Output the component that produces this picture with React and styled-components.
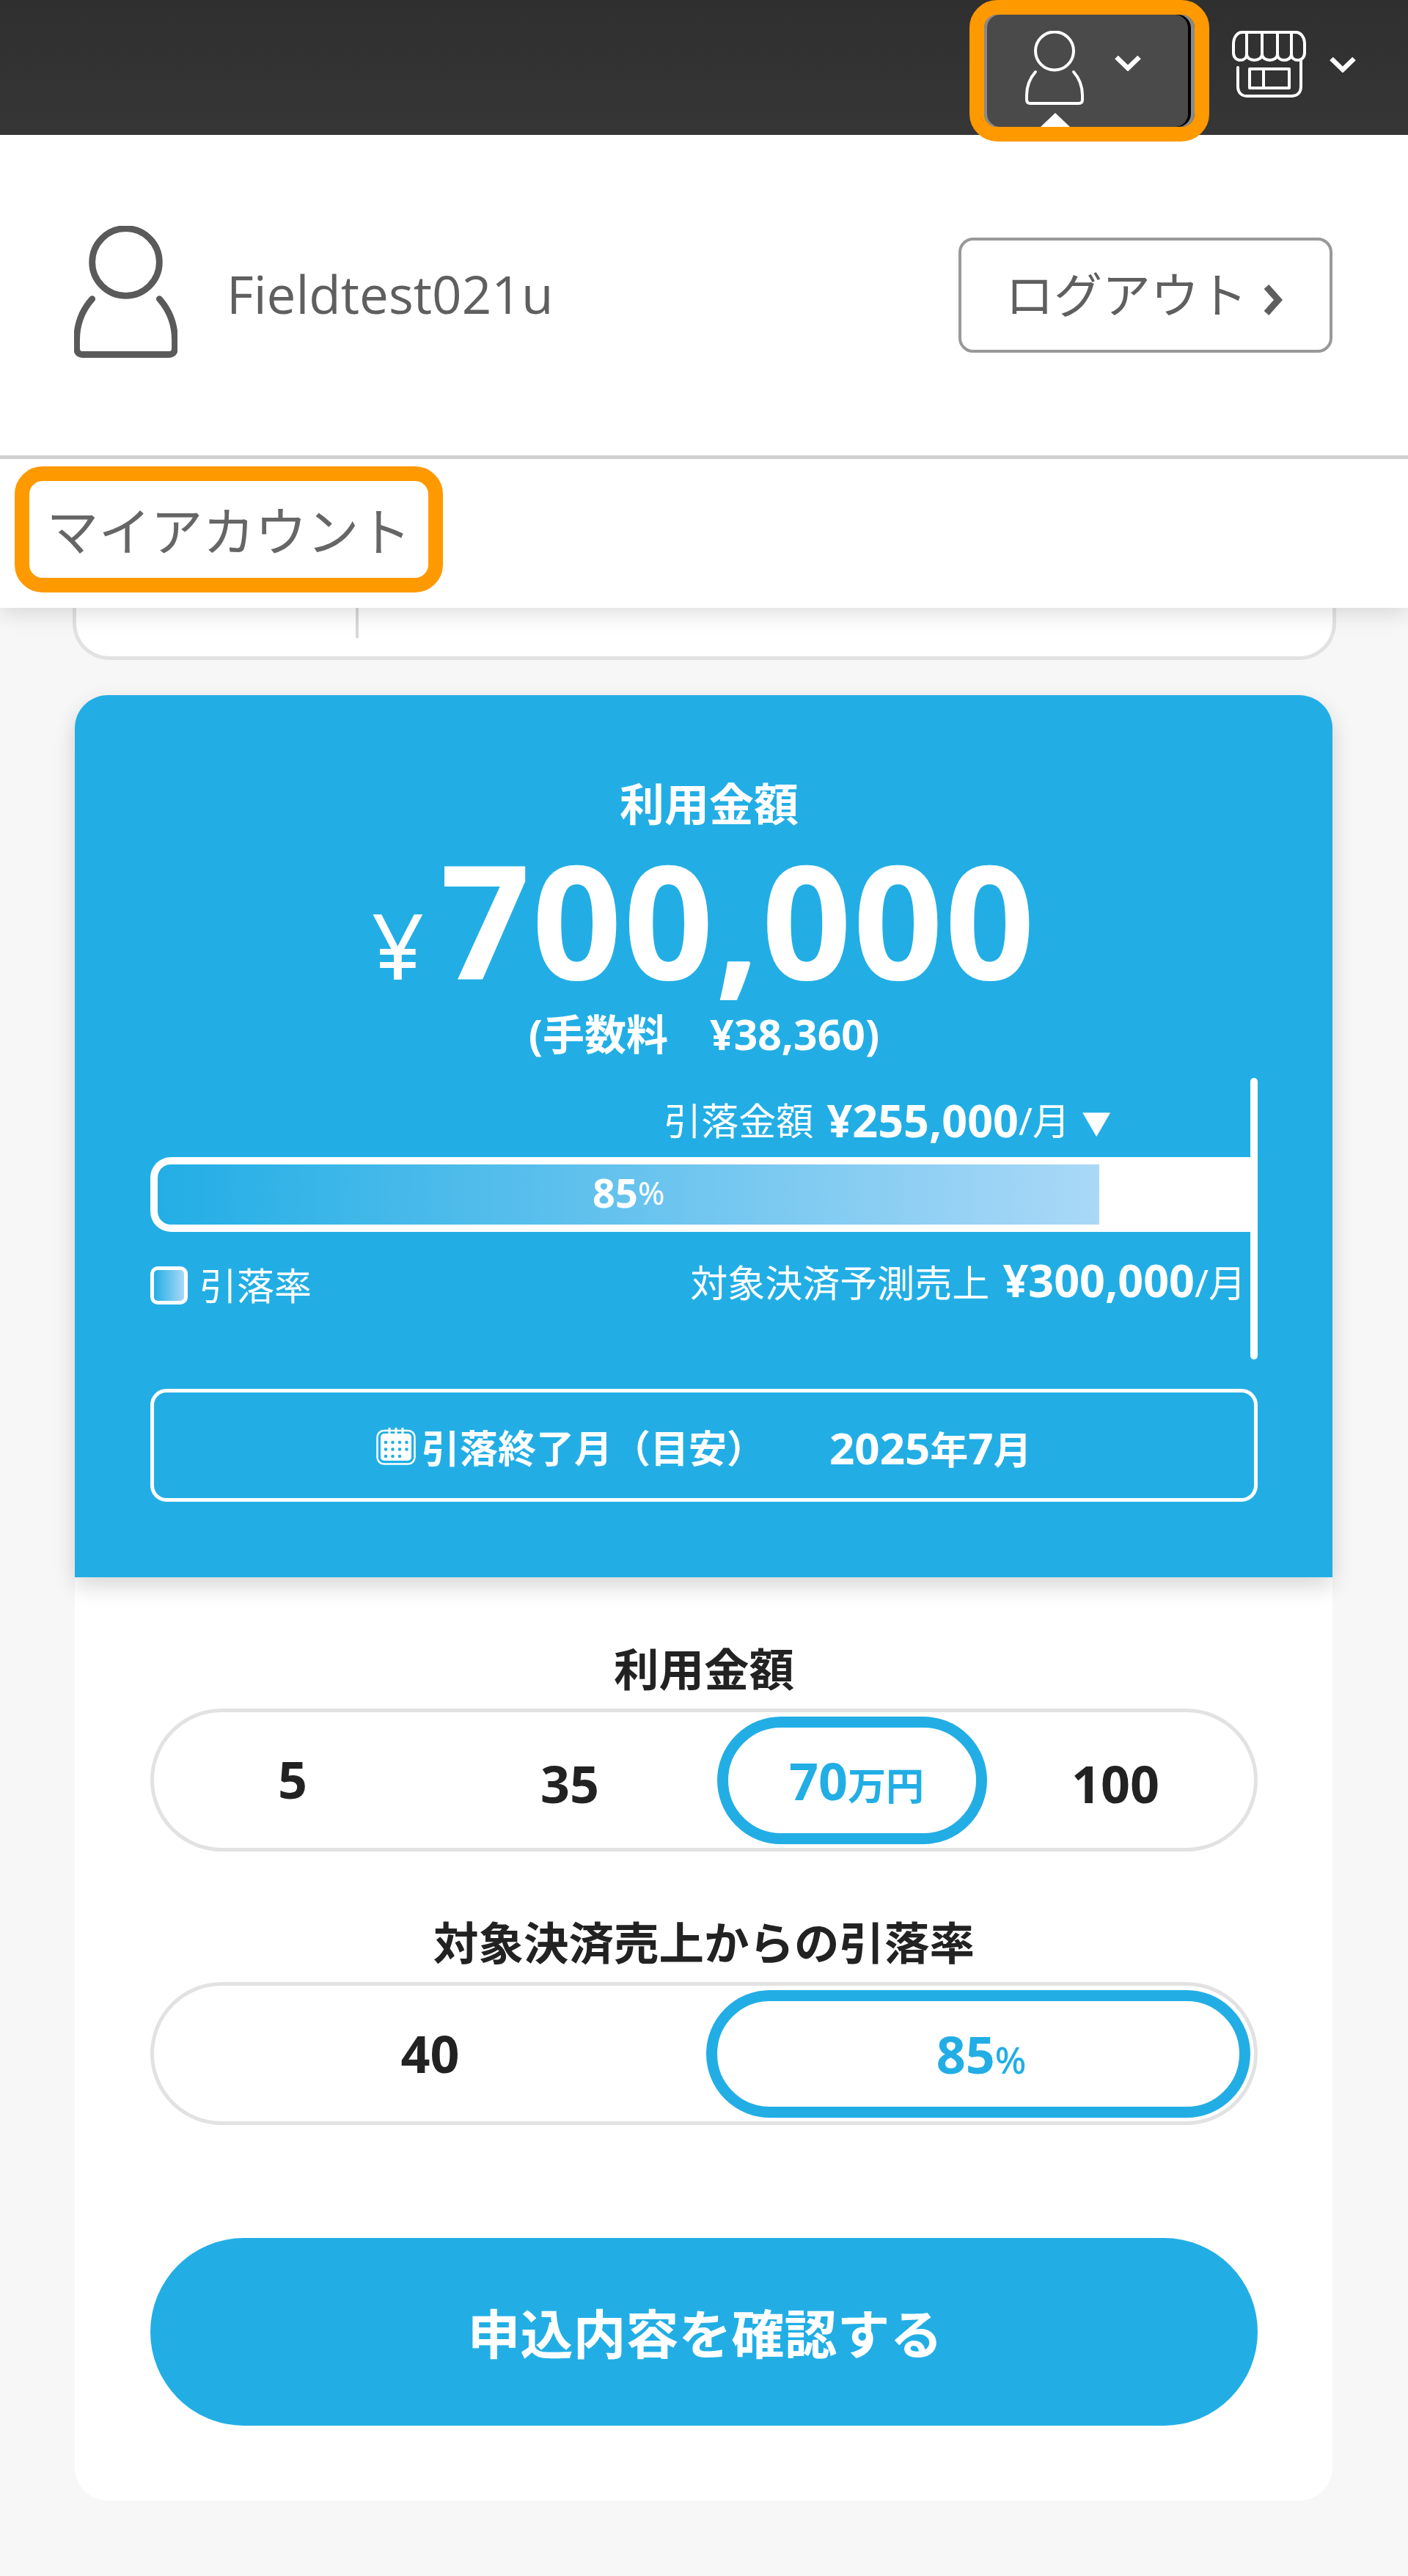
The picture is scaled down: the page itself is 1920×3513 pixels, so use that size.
import styled, { createGlobalStyle } from 'styled-components';

const blue = '#22aee5';
const orange = '#ff9900';

const GlobalStyle = createGlobalStyle`
  html, body {
    margin: 0;
    padding: 0;
    background: #f7f7f7;
    font-family: "Noto Sans", "Noto Sans CJK JP", sans-serif;
  }
  * {
    box-sizing: border-box;
  }
`;

const Page = styled.div`
  width: 1920px;
  height: 3513px;
  overflow: hidden;
  background: #f7f7f7;
`;

const Header = styled.header`
  position: relative;
  z-index: 3;
  height: 184px;
  display: flex;
  justify-content: flex-end;
  align-items: flex-start;
  background: linear-gradient(#2f2f2f, #363636);
`;

const UserButton = styled.div`
  width: 327px;
  height: 193px;
  margin-right: 31px;
  flex: none;
  border: 20px solid ${orange};
  border-radius: 38px;
  background: #4a4a4a;
  box-shadow: inset 4px 0 0 #8a8a8a, inset -5px 0 0 #8a8a8a, inset -9px 0 0 #000;
  padding: 22px 0 0 56px;
  display: flex;
  align-items: flex-start;
  position: relative;
`;

const Caret = styled.span`
  position: absolute;
  left: 77px;
  bottom: 0;
  width: 40px;
  height: 19px;
  background: #fff;
  clip-path: polygon(50% 0, 100% 100%, 0 100%);
`;

const ChevronWrap = styled.span`
  display: block;
  margin-left: ${(p) => p.$gap}px;
  margin-top: ${(p) => p.$top}px;
`;

const StoreButton = styled.div`
  width: 240px;
  flex: none;
  padding-top: 42px;
  display: flex;
  align-items: flex-start;
`;

const Panel = styled.section`
  position: relative;
  z-index: 2;
  background: #fff;
  height: 645px;
  box-shadow: 0 6px 30px rgba(0, 0, 0, 0.14);
`;

const UserRow = styled.div`
  height: 442px;
  padding: 0 103px 0 101px;
  display: flex;
  align-items: center;
  border-bottom: 5px solid #cfcfcf;
`;

const Avatar = styled.span`
  display: block;
  height: 180px;
  margin-bottom: 10px;
`;

const UserName = styled.div`
  font-family: "Open Sans", sans-serif;
  font-size: 71px;
  color: #5f5f5f;
  margin-left: 67px;
  margin-top: -4px;
`;

const Logout = styled.div`
  margin-left: auto;
  width: 510px;
  height: 157px;
  border: 4px solid #999;
  border-radius: 20px;
  display: flex;
  align-items: center;
  padding: 0 0 10px 60px;
  font-size: 66px;
  color: #5f5f5f;
  gap: 22px;
`;

const LogoutArrow = styled.span`
  display: block;
  height: 44px;
  margin-top: 22px;
  svg {
    display: block;
  }
`;

const Tab = styled.div`
  margin: 10px 0 0 20px;
  width: 584px;
  height: 172px;
  border: 20px solid ${orange};
  border-radius: 38px;
  display: flex;
  align-items: center;
  justify-content: center;
  padding-bottom: 3px;
  font-size: 71px;
  color: #666;
`;

const StubCard = styled.div`
  margin-left: 99px;
  width: 1723px;
  height: 71px;
  background: #fff;
  border: 5px solid #e2e2e2;
  border-top: none;
  border-radius: 0 0 50px 50px;
  padding-left: 381px;
`;

const StubLine = styled.div`
  width: 4px;
  height: 41px;
  background: #d8d8d8;
`;

const Card = styled.main`
  margin: 48px 0 0 102px;
  width: 1715px;
  height: 2462px;
  background: #fff;
  border-radius: 45px;
`;

const BluePanel = styled.div`
  height: 1203px;
  padding: 109px 102px 0 103px;
  background: ${blue};
  border-radius: 45px 45px 0 0;
  box-shadow: 0 12px 30px rgba(0, 0, 0, 0.16);
  color: #fff;
  position: relative;
`;

const Title = styled.div`
  text-align: center;
  font-size: 61px;
  font-weight: 700;
  line-height: 80px;
  padding-left: 14px;
`;

const Amount = styled.div`
  display: flex;
  justify-content: center;
  align-items: baseline;
  line-height: 230px;
  height: 230px;
  margin-top: 1px;
`;

const Yen = styled.span`
  font-size: 125px;
  font-weight: 400;
  margin-right: 22px;
`;

const AmountValue = styled.span`
  font-size: 215px;
  font-weight: 700;
  letter-spacing: 2px;
`;

const Fee = styled.div`
  text-align: center;
  font-size: 57px;
  font-weight: 700;
  line-height: 70px;
  height: 70px;
  margin-top: 7px;
`;

const Meter = styled.div`
  position: relative;
  margin-top: 25px;
  height: 384px;
  padding-right: 10px;
  &::after {
    content: '';
    position: absolute;
    right: 0;
    top: 0;
    bottom: 0;
    width: 10px;
    border-radius: 5px;
    background: #fff;
  }
`;

const MeterTop = styled.div`
  height: 108px;
  padding: 0 190px 19px 0;
  display: flex;
  justify-content: flex-end;
  align-items: flex-end;
  font-size: 51px;
  line-height: 62px;
`;

const Strong = styled.strong`
  font-size: 61px;
  font-weight: 700;
  margin-left: 18px;
`;

const Marker = styled.span`
  font-size: 40px;
  margin-left: 16px;
  margin-bottom: -4px;
`;

const Track = styled.div`
  height: 102px;
  background: #fff;
  border: 10px solid #fff;
  border-right: none;
  border-radius: 28px 0 0 28px;
`;

const Fill = styled.div`
  height: 100%;
  background: linear-gradient(90deg, #22aee5, #aad8f7);
  border-radius: 18px 0 0 18px;
  display: flex;
  align-items: center;
  justify-content: center;
  font-size: 54px;
  font-weight: 700;
  padding-bottom: 6px;
`;

const Small = styled.span`
  font-size: ${(p) => p.$size || 40}px;
  font-weight: ${(p) => p.$weight || 700};
`;

const MeterBottom = styled.div`
  display: flex;
  justify-content: space-between;
  align-items: center;
  padding: 30px 6px 0 0;
  font-size: 51px;
  line-height: 62px;
`;

const Legend = styled.div`
  display: flex;
  align-items: center;
  gap: 16px;
  margin-top: 12px;
`;

const Swatch = styled.span`
  width: 51px;
  height: 52px;
  border: 5px solid #fff;
  border-radius: 10px;
  background: linear-gradient(90deg, #22aee5, #aad8f7);
`;

const EndBox = styled.div`
  margin-top: 40px;
  height: 154px;
  border: 5px solid #fff;
  border-radius: 22px;
  display: flex;
  align-items: center;
  padding: 2px 0 0 303px;
  font-size: 52px;
  font-weight: 700;
  gap: 8px;
`;

const EndValue = styled.span`
  font-size: 60px;
  margin-left: 80px;
  margin-top: 4px;
`;

const Form = styled.div`
  padding: 85px 102px 103px 103px;
`;

const FieldLabel = styled.div`
  text-align: center;
  font-size: 61.5px;
  font-weight: 700;
  line-height: 80px;
  color: #222;
  margin-top: ${(p) => p.$top || 0}px;
  margin-bottom: 14px;
`;

const Selector = styled.div`
  height: 195px;
  border: 5px solid #e2e2e2;
  border-radius: 98px;
  background: #fff;
  display: grid;
  grid-template-columns: ${(p) => p.$columns};
  align-items: center;
`;

const Option = styled.div`
  height: 174px;
  display: flex;
  align-items: center;
  justify-content: center;
  font-size: 70px;
  font-weight: 700;
  color: #222;
  padding-top: ${(p) => p.$down || 0}px;
  padding-bottom: ${(p) => p.$up || 0}px;
`;

const ActiveOption = styled(Option)`
  border: 15px solid ${blue};
  border-radius: 87px;
  background: #fff;
  color: ${blue};
  margin-left: ${(p) => p.$left || 0}px;
  width: ${(p) => p.$width}px;
  padding-left: ${(p) => p.$pad || 0}px;
  align-items: baseline;
  line-height: 144px;
  padding-top: 0;
  padding-bottom: 0;
`;

const Submit = styled.div`
  margin-top: 154px;
  height: 256px;
  border-radius: 128px;
  background: ${blue};
  color: #fff;
  display: flex;
  align-items: center;
  justify-content: center;
  padding: 0 0 3px 3px;
  font-size: 72px;
  font-weight: 700;
`;

function PersonIcon({ width, height, color, stroke }) {
  return (
    <svg width={width} height={height} viewBox="0 0 80 101" fill="none" stroke={color} strokeWidth={stroke} strokeLinecap="round">
      <ellipse cx="40" cy="27.5" rx="26" ry="26" />
      <path d="M14 56C6 65 2 75 2 88V94Q2 99 7 99H73Q78 99 78 94V88C78 75 74 65 66 56" strokeLinejoin="round" />
    </svg>
  );
}

function Chevron() {
  return (
    <svg width="36" height="22" viewBox="0 0 36 22" fill="none" stroke="#fff" strokeWidth="6.5">
      <path d="M2.5 3L18 18L33.5 3" />
    </svg>
  );
}

function StoreIcon() {
  return (
    <svg width="101" height="91" viewBox="0 0 101 91" fill="none" stroke="#fff" strokeWidth="4" strokeLinecap="round" strokeLinejoin="round">
      <path d="M14 2H87C94 2 99 9 99 18V30C99 36 95 40 90 40C85 40 81 37 81 32C81 37 76 40 71.5 40C66 40 62 37 62 32C62 37 57 40 51.5 40C46 40 41 37 41 32C41 37 36 40 30.5 40C25 40 20 37 20 32C20 37 16 40 11 40C6 40 2 36 2 30V18C2 9 7 2 14 2Z" />
      <path d="M20 3V32M41 3V32M62 3V32M81 3V32" />
      <path d="M8 50V76C8 84 13 89 20 89H82C89 89 94 84 94 76V40" />
      <rect x="24" y="52" width="54" height="26" />
      <path d="M43 52V78" />
    </svg>
  );
}

function LogoutChevron() {
  return (
    <svg width="26" height="44" viewBox="0 0 26 44" fill="none" stroke="#5f5f5f" strokeWidth="9">
      <path d="M4 4L20 22L4 40" />
    </svg>
  );
}

function CalendarIcon() {
  const dots = [];
  for (let r = 0; r < 3; r++) {
    for (let c = 0; c < 4; c++) {
      if (r === 2 && c === 3) continue;
      dots.push(<circle key={`${r}${c}`} cx={13 + c * 9.5} cy={21 + r * 9.5} r="2.3" fill={blue} />);
    }
  }
  return (
    <svg width="54" height="52" viewBox="0 0 54 52">
      <rect x="1.5" y="5" width="51" height="45.5" rx="9" fill="none" stroke="#fff" strokeWidth="2.5" />
      <rect x="6" y="9" width="42" height="37" rx="5" fill="#fff" />
      <path d="M18 1V12M27 1V12M36 1V12" stroke="#fff" strokeWidth="3" />
      {dots}
    </svg>
  );
}

export default function App() {
  return (
    <Page>
      <GlobalStyle />
      <Header>
        <UserButton>
          <PersonIcon width={80} height={101} color="#fff" stroke={4} />
          <ChevronWrap $gap={42} $top={33}>
            <Chevron />
          </ChevronWrap>
          <Caret />
        </UserButton>
        <StoreButton>
          <StoreIcon />
          <ChevronWrap $gap={32} $top={35}>
            <Chevron />
          </ChevronWrap>
        </StoreButton>
      </Header>
      <Panel>
        <UserRow>
          <Avatar>
            <PersonIcon width={141} height={180} color="#5a5a5a" stroke={5} />
          </Avatar>
          <UserName>Fieldtest021u</UserName>
          <Logout>
            ログアウト
            <LogoutArrow>
              <LogoutChevron />
            </LogoutArrow>
          </Logout>
        </UserRow>
        <Tab>マイアカウント</Tab>
      </Panel>
      <StubCard>
        <StubLine />
      </StubCard>
      <Card>
        <BluePanel>
          <Title>利用金額</Title>
          <Amount>
            <Yen>¥</Yen>
            <AmountValue>700,000</AmountValue>
          </Amount>
          <Fee>(手数料　¥38,360)</Fee>
          <Meter>
            <MeterTop>
              引落金額<Strong>¥255,000</Strong>/月<Marker>▼</Marker>
            </MeterTop>
            <Track>
              <Fill style={{ width: '86.2%' }}>
                85<Small $size={44} $weight={400}>%</Small>
              </Fill>
            </Track>
            <MeterBottom>
              <Legend>
                <Swatch />
                引落率
              </Legend>
              <div>
                対象決済予測売上<Strong>¥300,000</Strong>/月
              </div>
            </MeterBottom>
          </Meter>
          <EndBox>
            <CalendarIcon />
            引落終了月（目安）
            <EndValue>
              2025<Small $size={52}>年</Small>7<Small $size={52}>月</Small>
            </EndValue>
          </EndBox>
        </BluePanel>
        <Form>
          <FieldLabel>利用金額</FieldLabel>
          <Selector $columns="378px 378px 380px 350px">
            <Option $up={4}>5</Option>
            <Option $down={8}>35</Option>
            <ActiveOption $left={12} $width={368} $pad={12}>
              70<Small $size={52} $weight={700}>万円</Small>
            </ActiveOption>
            <Option $down={8}>100</Option>
          </Selector>
          <FieldLabel $top={84}>対象決済売上からの引落率</FieldLabel>
          <Selector $columns="753px 742px">
            <Option $up={2}>40</Option>
            <ActiveOption $width={742} $pad={8}>
              85<Small $size={50} $weight={500}>%</Small>
            </ActiveOption>
          </Selector>
          <Submit>申込内容を確認する</Submit>
        </Form>
      </Card>
    </Page>
  );
}
